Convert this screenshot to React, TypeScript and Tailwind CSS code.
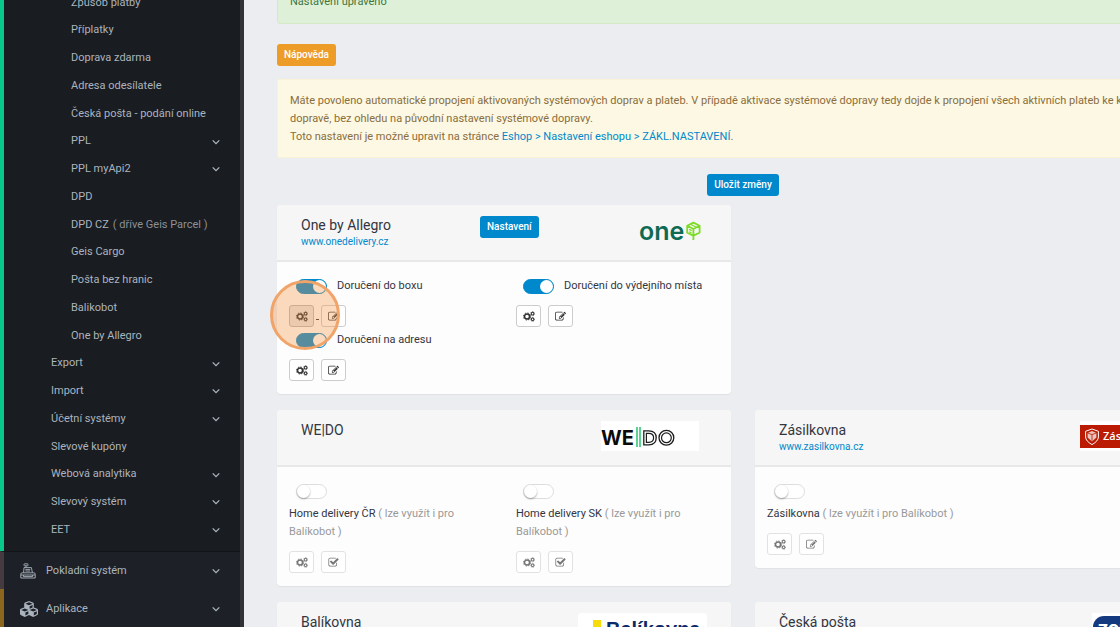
import type { ReactNode } from "react";
import { FaCubes } from "react-icons/fa";

interface NavItem {
  label: string;
  note?: string;
  level: 1 | 2;
  expandable?: boolean;
}

const NAV: NavItem[] = [
  { label: "Způsob platby", level: 2 },
  { label: "Příplatky", level: 2 },
  { label: "Doprava zdarma", level: 2 },
  { label: "Adresa odesílatele", level: 2 },
  { label: "Česká pošta - podání online", level: 2 },
  { label: "PPL", level: 2, expandable: true },
  { label: "PPL myApi2", level: 2, expandable: true },
  { label: "DPD", level: 2 },
  { label: "DPD CZ", note: "( dříve Geis Parcel )", level: 2 },
  { label: "Geis Cargo", level: 2 },
  { label: "Pošta bez hranic", level: 2 },
  { label: "Balikobot", level: 2 },
  { label: "One by Allegro", level: 2 },
  { label: "Export", level: 1, expandable: true },
  { label: "Import", level: 1, expandable: true },
  { label: "Účetní systémy", level: 1, expandable: true },
  { label: "Slevové kupóny", level: 1 },
  { label: "Webová analytika", level: 1, expandable: true },
  { label: "Slevový systém", level: 1, expandable: true },
  { label: "EET", level: 1, expandable: true },
];

function Chevron() {
  return (
    <svg viewBox="0 0 8 8" className="ml-auto size-2 shrink-0" fill="none" stroke="currentColor" strokeWidth="1.3">
      <path d="M0.7 2.4 4 5.6 7.3 2.4" />
    </svg>
  );
}

function GearsIcon() {
  return (
    <svg viewBox="0 0 22 20" className="h-[11px] w-3" fill="none" stroke="currentColor">
      <circle cx="7.4" cy="10" r="4.7" strokeWidth="2.9" />
      <circle cx="7.4" cy="10" r="6.5" strokeWidth="1.8" strokeDasharray="2.6 2.5" />
      <circle cx="17.6" cy="4.8" r="2.4" strokeWidth="1.9" />
      <circle cx="17.6" cy="4.8" r="3.7" strokeWidth="1.2" strokeDasharray="1.6 1.3" />
      <circle cx="17.6" cy="15.2" r="2.4" strokeWidth="1.9" />
      <circle cx="17.6" cy="15.2" r="3.7" strokeWidth="1.2" strokeDasharray="1.6 1.3" />
    </svg>
  );
}

function EditIcon() {
  return (
    <svg viewBox="0 0 1792 1792" className="size-[11px]" fill="currentColor">
      <path d="M888 1184l116-116-152-152-116 116v56h96v96h56zm440-720q-16-16-33 1l-350 350q-17 17-1 33t33-1l350-350q17-17 1-33zm80 594v190q0 119-84.5 203.5t-203.5 84.5h-832q-119 0-203.5-84.5t-84.5-203.5v-832q0-119 84.5-203.5t203.5-84.5h832q63 0 117 25 15 7 18 23 3 17-9 29l-49 49q-14 14-32 8-23-6-45-6h-832q-66 0-113 47t-47 113v832q0 66 47 113t113 47h832q66 0 113-47t47-113v-126q0-13 9-22l64-64q15-15 35-7t20 29zm-96-738l288 288-672 672h-288v-288zm444 132l-92 92-288-288 92-92q28-28 68-28t68 28l152 152q28 28 28 68t-28 68z" />
    </svg>
  );
}

function CheckIcon() {
  return (
    <svg viewBox="0 0 1792 1792" className="size-[11px]" fill="currentColor">
      <path d="M1472 930v318q0 119-84.5 203.5t-203.5 84.5h-832q-119 0-203.5-84.5t-84.5-203.5v-832q0-119 84.5-203.5t203.5-84.5h832q63 0 117 25 15 7 18 23 3 17-9 29l-49 49q-10 10-23 10-3 0-9-2-23-6-45-6h-832q-66 0-113 47t-47 113v832q0 66 47 113t113 47h832q66 0 113-47t47-113v-254q0-13 9-22l64-64q10-10 23-10 6 0 12 3 20 8 20 29zm231-489l-814 814q-24 24-57 24t-57-24l-430-430q-24-24-24-57t24-57l110-110q24-24 57-24t57 24l263 263 647-647q24-24 57-24t57 24l110 110q24 24 24 57t-24 57z" />
    </svg>
  );
}

function RegisterIcon() {
  return (
    <svg viewBox="0 0 16 16" className="size-4" fill="none" stroke="currentColor" strokeWidth="0.9">
      <rect x="4" y="0.8" width="4" height="2" rx="0.6" />
      <path d="M6 2.8v1.6M3.6 9.6 4 4.6h7.4l1 5M5.4 6.4h4.8M5.4 8h4.8" />
      <path d="M0.8 15V11.2q0-1.4 1.4-1.4h11.6q1.4 0 1.4 1.4V15zM0.8 12h14.4M3.4 12v1.6h9.2V12" />
    </svg>
  );
}

function OneLogo() {
  return (
    <svg viewBox="0 0 62 30" className="mr-1.5 h-[30px] w-[62px]" role="img" aria-label="one">
      <text x="0" y="24" fontFamily="Inter, sans-serif" fontWeight="600" fontSize="25" fill="#0d6a53">
        one
      </text>
      <g fill="none" stroke="#7ddc26" strokeWidth="1.8" strokeLinejoin="round">
        <path d="M54.4 6.6 60.6 9.8V16.6L54.4 19.8 48.2 16.6V9.8zM48.2 9.8 54.4 13 60.6 9.8M54.4 13V24" />
        <path d="M50.2 13.4l2.4 1.2M50.2 15.8l2.4 1.2M51.4 8.2l5.9 3" strokeWidth="1.2" />
      </g>
    </svg>
  );
}

function WedoLogo() {
  return (
    <svg viewBox="0 0 98 30" className="mr-2 h-[30px] w-[98px] bg-white" role="img" aria-label="WE|DO">
      <text x="0" y="24" fontFamily="Inter, sans-serif" fontWeight="700" fontSize="20" fill="#0b0b0b">
        WE
      </text>
      <path d="M36 6v20M39 6v20" stroke="#35c979" strokeWidth="1.6" />
      <g fill="none" stroke="#1c1c1c">
        <path d="M42.8 9.8h5q7.4 0 7.4 7t-7.4 7h-5z" strokeWidth="1.3" />
        <path d="M45.4 12.3h2.4q4.8 0 4.8 4.5t-4.8 4.500h-2.4z" strokeWidth="1.2" />
        <circle cx="65.4" cy="16.8" r="7.4" strokeWidth="1.3" />
        <circle cx="65.4" cy="16.8" r="4.9" strokeWidth="1.2" />
      </g>
    </svg>
  );
}

function ZasilkovnaLogo() {
  return (
    <svg viewBox="0 0 98 30" className="mr-[7px] h-[30px] w-[98px] bg-white" role="img" aria-label="Zásilkovna">
      <rect y="4" width="98" height="23" fill="#ba1b02" />
      <g fill="none" stroke="#fff" strokeLinejoin="round">
        <path d="M12 8 18.4 10.3V16q0 4-6.4 7.6Q5.6 20 5.6 16V10.3z" strokeWidth="1" />
        <path d="M12 10 16.4 12v4.4L12 20.4 7.6 16.4V12z" fill="#e9c5bf" stroke="none" />
        <path d="M7.6 12 12 13.6 16.4 12M12 13.6V20.4" stroke="#ba1b02" strokeWidth="0.8" />
      </g>
      <text x="23" y="19" fontFamily="Open Sans, sans-serif" fontWeight="600" fontSize="11" fill="#fff">
        Zásilkovna
      </text>
    </svg>
  );
}

function BalikovnaLogo() {
  return (
    <svg viewBox="0 0 129 34" className="h-[34px] w-[129px] rounded bg-white" role="img" aria-label="Balíkovna">
      <rect x="15" y="7" width="8" height="20" fill="#f7dc0c" />
      <text x="28" y="23" fontFamily="Liberation Sans, sans-serif" fontWeight="700" fontSize="20" fill="#0c2a68">
        Balíkovna
      </text>
    </svg>
  );
}

function PostaLogo() {
  return (
    <svg viewBox="0 0 93 34" className="h-[34px] w-[93px] bg-white" role="img" aria-label="Česká pošta">
      <rect x="1" y="3" width="90" height="28" rx="11" fill="#14397f" />
      <text x="6" y="22" fontFamily="Inter, sans-serif" fontWeight="800" fontSize="15" fill="#fff">
        ZONA
      </text>
    </svg>
  );
}

const PRIMARY_BUTTON =
  "h-[22px] rounded-[3px] bg-[#0088cc] px-[7px] text-[10px] leading-4 font-medium text-white";

function IconButton({ label, muted, children }: { label: string; muted?: boolean; children: ReactNode }) {
  return (
    <button
      aria-label={label}
      className={`flex h-[22px] w-[25px] items-center justify-center rounded-[3px] border bg-white ${
        muted ? "border-[#e2e2e2] text-[#777]" : "border-[#ccc] text-[#333]"
      }`}
    >
      {children}
    </button>
  );
}

interface DeliveryProps {
  name: string;
  note?: string;
  on?: boolean;
  active?: boolean;
  action: "edit" | "check";
}

function Delivery({ name, note, on, active, action }: DeliveryProps) {
  return (
    <div className="px-3">
      <label className={on ? "flex items-center leading-[18px]" : "block leading-[18px]"}>
        <span className={`ml-[7px] flex h-[18px] items-center ${on ? "mr-[10px]" : "mb-[5px]"}`}>
          <input
            type="checkbox"
            role="switch"
            defaultChecked={on}
            className="flex h-[15px] w-[31px] appearance-none items-center rounded-full border border-[#ddd] bg-white before:size-[13px] before:rounded-full before:bg-white before:shadow-[0_1px_2px_rgba(0,0,0,0.35)] checked:justify-end checked:border-[#0088cc] checked:bg-[#0088cc] checked:before:shadow-none"
          />
        </span>
        <span className="text-[#33353f]">{name}</span>
        {note && <span className="text-[#999]"> {note}</span>}
      </label>
      <div className="mt-[10px] flex">
        <div className={active ? "rounded-[3px] brightness-90" : ""}>
          <IconButton label="Nastavení dopravy" muted={!on}>
            <GearsIcon />
          </IconButton>
        </div>
        {/* underline of the hovered link's trailing space */}
        <span className={`mx-[2px] mb-[7px] w-[3px] self-end border-b ${active ? "border-[#333]" : "border-transparent"}`} />
        <IconButton label={action === "edit" ? "Upravit" : "Vybrat"} muted={!on}>
          {action === "edit" ? <EditIcon /> : <CheckIcon />}
        </IconButton>
      </div>
    </div>
  );
}

interface CardProps {
  title: string;
  url?: string;
  settings?: boolean;
  logo: ReactNode;
  children?: ReactNode;
}

function CarrierCard({ title, url, settings, logo, children }: CardProps) {
  return (
    <section className="rounded-[4px] bg-[#fdfdfd] shadow-[0_1px_1px_rgba(0,0,0,0.05)]">
      <header className="flex h-[57px] items-start rounded-t-[4px] border-b-2 border-[#e8e8e8] bg-[#f6f6f6] px-6 pt-[11px]">
        <div className="w-[179px]">
          <h2 className="text-[14px] leading-[18px] text-[#33353f]">{title}</h2>
          {url && (
            <a href={`https://${url}`} className="block text-[10px] leading-4 text-[#0088cc]">
              {url}
            </a>
          )}
        </div>
        {settings && <button className={PRIMARY_BUTTON}>Nastavení</button>}
        <div className="ml-auto">{logo}</div>
      </header>
      {children && <div className="grid grid-cols-2 gap-y-1 pt-[15px] pb-[13px]">{children}</div>}
    </section>
  );
}

function Sidebar() {
  return (
    <nav className="flex h-screen w-[244px] shrink-0 flex-col overflow-hidden border-r-4 border-[#303238] bg-[#1d2127] text-[#abb4be]">
      <div className="flex min-h-0 flex-1 flex-col border-l-4 border-[#08c98a] bg-[#191c21] pb-[7px]">
        <ul className="-mt-[11px] flex flex-1 flex-col">
          {NAV.map((item) => (
            <li key={item.label} className="flex flex-1">
              <a
                href="#"
                className={`flex flex-1 items-center pr-5 ${item.level === 2 ? "pl-[67px]" : "pl-[47px]"}`}
              >
                {item.label}
                {item.note && <span className="ml-1 text-[#8b9199]">{item.note}</span>}
                {item.expandable && <Chevron />}
              </a>
            </li>
          ))}
        </ul>
      </div>
      <a href="#" className="flex h-[38px] items-center gap-[10px] border-t border-l-4 border-t-[#121418] border-l-[#453a3f] pt-px pr-5 pl-4">
        <RegisterIcon />
        Pokladní systém
        <Chevron />
      </a>
      <a href="#" className="flex h-[38px] items-center gap-2 border-l-4 border-[#8c661c] pt-[2px] pr-5 pl-4">
        <FaCubes className="size-[18px]" />
        Aplikace
        <Chevron />
      </a>
    </nav>
  );
}

export default function App() {
  return (
    <div className="flex h-screen overflow-hidden bg-[#ecedf0] font-[Roboto,Arial,sans-serif] text-[11px]">
      <Sidebar />
      <main className="min-w-0 flex-1 overflow-hidden pl-[33px]">
        <div className="min-w-[932px]">
          <div className="flex h-6 items-start rounded-b-[4px] border border-t-0 border-[#d6e9c6] bg-[#dff0d8] px-3 text-[#3c763d]">
            <p className="-mt-[7px] leading-[18px]">Nastavení upraveno</p>
          </div>

          <button className="mt-5 block h-[22px] rounded-[3px] bg-[#ed9c28] px-[7px] text-[10px] leading-4 font-medium text-white">
            Nápověda
          </button>

          <div className="mt-[13px] rounded-[2px] border border-[#faf2d6] bg-[#fcf8e3] px-3 pt-3 pb-[11px] leading-[18px] whitespace-nowrap text-[#8a6d3b]">
            Máte povoleno automatické propojení aktivovaných systémových doprav a plateb. V případě aktivace
            systémové dopravy tedy dojde k propojení všech aktivních plateb ke konkrétní
            <br />
            dopravě, bez ohledu na původní nastavení systémové dopravy.
            <br />
            Toto nastavení je možné upravit na stránce{" "}
            <a href="#" className="text-[#0088cc]">
              Eshop &gt; Nastavení eshopu &gt; ZÁKL.NASTAVENÍ
            </a>
            .
          </div>

          <div className="mt-4 flex justify-center">
            <button className={PRIMARY_BUTTON}>Uložit změny</button>
          </div>

          <div className="mt-[9px] grid grid-cols-2 items-start gap-x-6 gap-y-4">
            <div className="relative">
              <CarrierCard title="One by Allegro" url="www.onedelivery.cz" settings logo={<OneLogo />}>
                <Delivery name="Doručení do boxu" on active action="edit" />
                <Delivery name="Doručení do výdejního místa" on action="edit" />
                <Delivery name="Doručení na adresu" on action="edit" />
              </CarrierCard>
              <div className="pointer-events-none absolute top-[75px] -left-[7px] size-[70px] rounded-full border-[3px] border-[#f1a469] bg-[#f79646]/35" />
            </div>
            <div />
            <CarrierCard title="WE|DO" logo={<WedoLogo />}>
              <Delivery name="Home delivery ČR" note="( lze využít i pro Balíkobot )" action="check" />
              <Delivery name="Home delivery SK" note="( lze využít i pro Balíkobot )" action="check" />
            </CarrierCard>
            <CarrierCard title="Zásilkovna" url="www.zasilkovna.cz" logo={<ZasilkovnaLogo />}>
              <Delivery name="Zásilkovna" note="( lze využít i pro Balíkobot )" action="edit" />
            </CarrierCard>
            <CarrierCard title="Balíkovna" logo={<BalikovnaLogo />} />
            <CarrierCard title="Česká pošta" logo={<PostaLogo />} />
          </div>
        </div>
      </main>
    </div>
  );
}
